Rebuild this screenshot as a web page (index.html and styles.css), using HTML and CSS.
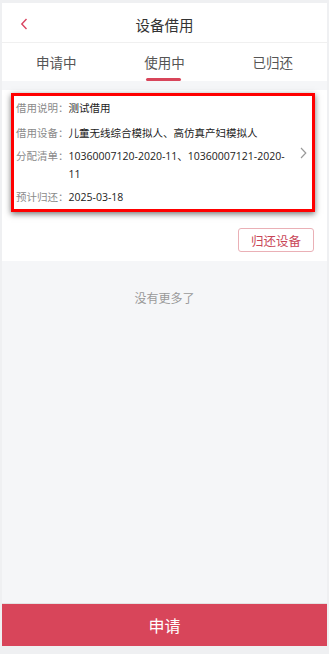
FILE: index.html
```html
<!DOCTYPE html>
<html lang="zh">
<head>
<meta charset="utf-8">
<link rel="stylesheet" href="styles.css">
</head>
<body>
<div class="phone">
  <header class="nav">
    <span class="back">
      <svg width="8" height="12" viewBox="0 0 8 12"><path d="M6.5 1 L1.8 6 L6.5 11" fill="none" stroke="#d94460" stroke-width="1.4"/></svg>
    </span>
    <h1 class="title">设备借用</h1>
  </header>
  <nav class="tabs">
    <div class="tab">申请中</div>
    <div class="tab active">使用中</div>
    <div class="tab">已归还</div>
  </nav>
  <main class="content">
    <section class="card">
      <div class="info">
        <div class="rows">
          <div class="row first"><span class="label">借用说明：</span><span class="value">测试借用</span></div>
          <div class="row"><span class="label">借用设备：</span><span class="value">儿童无线综合模拟人、高仿真产妇模拟人</span></div>
          <div class="row"><span class="label">分配清单：</span><span class="value">10360007120-2020-11、10360007121-2020-11</span></div>
          <div class="row"><span class="label">预计归还：</span><span class="value">2025-03-18</span></div>
        </div>
        <svg class="chev" width="7" height="12" viewBox="0 0 7 12"><path d="M1 1 L5.8 6 L1 11" fill="none" stroke="#9a9a9a" stroke-width="1.2"/></svg>
      </div>
      <div class="actions">
        <button class="return">归还设备</button>
      </div>
    </section>
    <p class="nomore">没有更多了</p>
  </main>
  <footer class="apply">申请</footer>
</div>
</body>
</html>
```
FILE: styles.css
```css
* { box-sizing: border-box; }
html, body { margin: 0; padding: 0; }
body {
  background: #eff0f2;
  padding: 3px 2px 0 2px;
  font-family: "Noto Sans CJK SC", "Noto Sans", sans-serif;
  width: 329px;
  height: 654px;
  overflow: hidden;
}
.phone {
  width: 325px;
  height: 643px;
  display: flex;
  flex-direction: column;
  background: #f5f6f8;
}
.nav {
  height: 40px;
  background: #fff;
  display: flex;
  align-items: center;
  justify-content: center;
  position: relative;
  border-bottom: 1px solid #f0f0f0;
  padding-top: 3px;
}
.back {
  position: absolute;
  left: 18px;
  top: 15px;
  display: flex;
}
.title {
  margin: 0;
  font-size: 14.5px;
  font-weight: normal;
  color: #333;
}
.tabs {
  height: 38px;
  background: #fff;
  display: flex;
}
.tab {
  flex: 1;
  text-align: center;
  font-size: 13.5px;
  color: #555;
  line-height: 38px;
  position: relative;
}
.tab.active::after {
  content: "";
  position: absolute;
  left: 50%;
  margin-left: -18px;
  width: 35px;
  height: 3px;
  border-radius: 2px;
  bottom: 0;
  background: #d8455a;
}
.content {
  flex: 1;
  padding-top: 9px;
}
.card {
  background: #fff;
  padding: 3px 12px 9px 9px;
}
.info {
  border: 3px solid #ff0000;
  box-shadow: 0 2px 6px rgba(0,0,0,0.55);
  padding: 3px 3px 3px 2px;
  display: flex;
  align-items: center;
}
.rows { flex: 1; padding-right: 10px; }
.row {
  display: flex;
  font-family: "Open Sans", "Noto Sans CJK SC", sans-serif;
  font-size: 10.5px;
  line-height: 18px;
  margin-top: 5px;
}
.row.first { margin-top: 0; margin-bottom: 7px; }
.label { color: #8a8a8a; flex: none; }
.value { color: #222; }
.chev { flex: none; margin-right: 2px; }
.actions {
  display: flex;
  justify-content: flex-end;
  padding-top: 16px;
}
.return {
  width: 76px;
  height: 24px;
  border: 1px solid #eab0b6;
  border-radius: 3px;
  background: #fff;
  color: #c84556;
  font-family: inherit;
  font-size: 12.5px;
  padding: 0;
  margin-right: 1px;
}
.nomore {
  margin: 28px 0 0;
  text-align: center;
  font-size: 12px;
  color: #999;
}
.apply {
  height: 43px;
  background: #d8455a;
  color: #fff;
  font-size: 16px;
  display: flex;
  align-items: center;
  justify-content: center;
  border-top: 1px solid #e3e3e3;
}
```
